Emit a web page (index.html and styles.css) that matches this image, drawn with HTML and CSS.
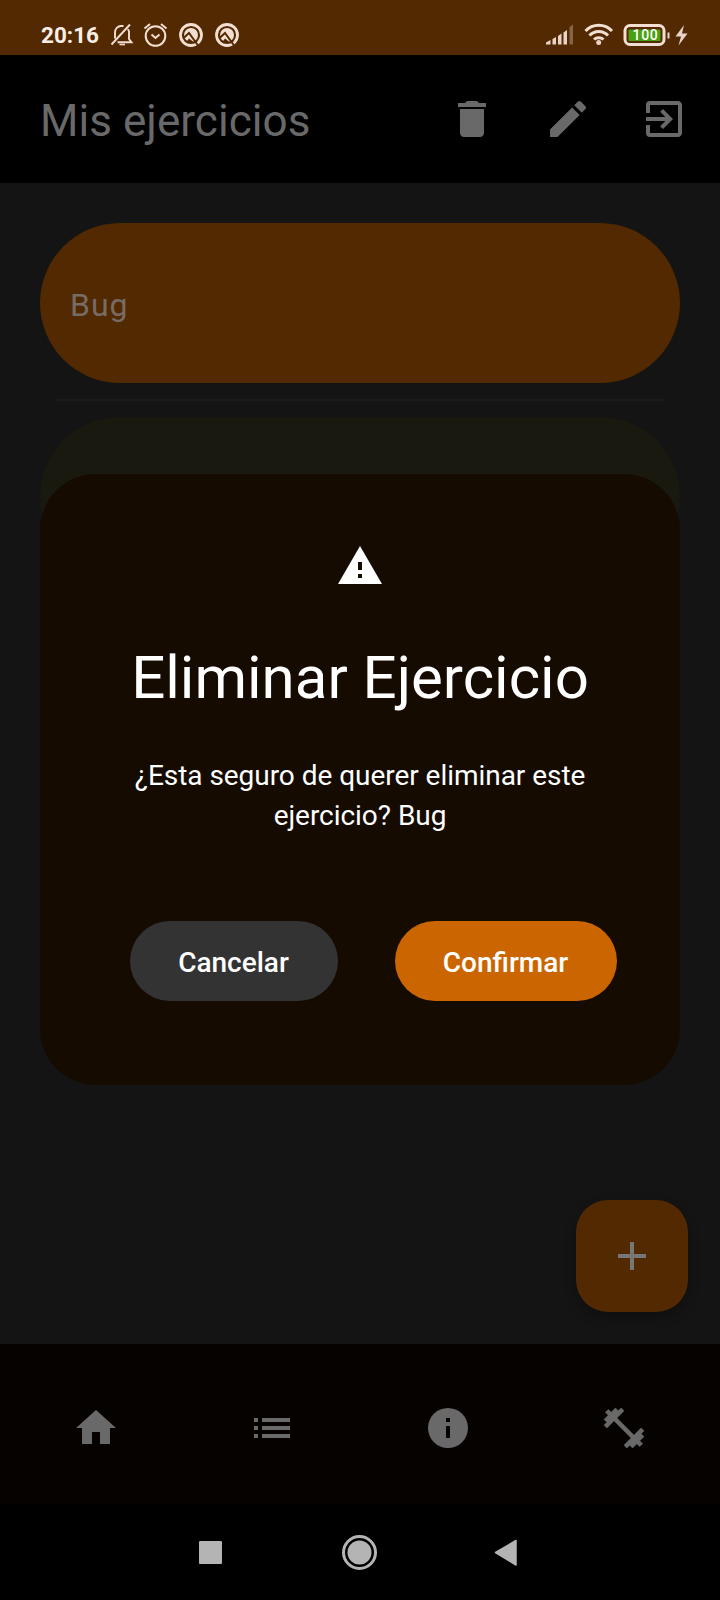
FILE: index.html
```html
<!DOCTYPE html>
<html lang="es">
<head>
<meta charset="utf-8">
<title>Mis ejercicios</title>
<link rel="stylesheet" href="styles.css">
</head>
<body>
<div class="screen">
  <header class="status">
    <span class="clock">20:16</span>
    <svg class="status-left" width="136" height="32" viewBox="0 0 136 32" fill="none" stroke="#f2dfd2" stroke-width="2">
      <path d="M9.500 25.300H23.500L21 22v-7.500l-1-2.500M7 21.500v-6c0-3.500 2.500-6 5.500-6.500h3M3.500 27.500L22 7.500" stroke-width="1.900"/>
      <path d="M11.500 27.500h5.500" stroke-width="1.600"/>
      <circle cx="47.500" cy="19" r="9.800"/><path d="M43.500 17.500l4 3.500 4-3.500M36.500 11.500l5.500-4.500M58.500 11.500l-5.500-4.500"/>
      <g id="q">
        <circle cx="83" cy="18" r="10.500" stroke-width="2.800"/>
        <circle cx="83" cy="18" r="7" fill="#f2dfd2" stroke="none"/>
        <path d="M75 21.500l6-5.500 9.800 13.500" stroke="#522900" stroke-width="2"/>
        <path d="M78 25.500l3-4 4.500 3.500z" fill="#522900" stroke="none"/>
      </g>
      <use href="#q" x="36"/>
    </svg>
    <svg class="status-right" width="146" height="32" viewBox="0 0 146 32" fill="#e9d3c7">
      <path d="M0 27.500v-2l4.500-2.500v4.500zM6.500 27.500v-5.500l3.500-2v7.500zM12 27.500v-8.500l3.500-2.500v11zM17.500 27.500v-12l3.500-2.500v14.500z"/>
      <path d="M23.500 27.500v-17.500l3.500-2.500v20z" opacity=".35"/>
      <g fill="none" stroke="#f2dfd2" stroke-width="3">
        <path d="M39.500 14a18 18 0 0 1 26.500 0M43.500 18.500a12.500 12.500 0 0 1 18.500 0M48 22.500a7 7 0 0 1 9.500 0"/>
        <rect x="79" y="8.500" width="39" height="19" rx="5"/>
      </g>
      <circle cx="52.700" cy="25.500" r="2.500"/>
      <rect x="82.500" y="12.500" width="32" height="11.500" rx="1" fill="#49a010"/>
      <path d="M121.500 15.500h2v6h-2zM138 8l-8.500 11.500h5.500l-2.500 9 9-12h-5.500z"/>
      <text x="99.500" y="23" class="battery" text-anchor="middle">100</text>
    </svg>
  </header>
  <div class="appbar">
    <h1>Mis ejercicios</h1>
    <div class="actions">
      <svg class="icon" viewBox="0 0 24 24"><path d="M6 19c0 1.100.9 2 2 2h8c1.100 0 2-.9 2-2V7H6v12zM19 4h-3.500l-1-1h-5l-1 1H5v2h14V4z"/></svg>
      <svg class="icon" viewBox="0 0 24 24"><path d="M3 17.250V21h3.750L17.810 9.940l-3.750-3.750L3 17.250zM20.710 7.040a1 1 0 0 0 0-1.410l-2.340-2.340a1 1 0 0 0-1.410 0l-1.830 1.830 3.750 3.750 1.830-1.830z"/></svg>
      <svg class="icon" viewBox="0 0 24 24"><path d="M10.090 15.590L11.500 17l5-5-5-5-1.410 1.410L12.670 11H3v2h9.670l-2.580 2.590zM19 3H5a2 2 0 0 0-2 2v4h2V5h14v14H5v-4H3v4a2 2 0 0 0 2 2h14c1.100 0 2-.9 2-2V5c0-1.100-.9-2-2-2z"/></svg>
    </div>
  </div>
  <main class="content">
    <div class="card">Bug</div>
    <div class="divider"></div>
    <div class="card card-faded"></div>
    <button class="fab" aria-label="Agregar"><svg class="icon" viewBox="0 0 24 24"><path d="M19 13h-6v6h-2v-6H5v-2h6V5h2v6h6v2z"/></svg></button>
  </main>
  <nav class="tabs">
    <div class="tab"><svg class="icon" viewBox="0 0 24 24"><path d="M10 20v-6h4v6h5v-8h3L12 3 2 12h3v8z"/></svg></div>
    <div class="tab"><svg class="icon" viewBox="0 0 24 24"><path d="M3 13h2v-2H3v2zm0 4h2v-2H3v2zm0-8h2V7H3v2zm4 4h14v-2H7v2zm0 4h14v-2H7v2zM7 7v2h14V7H7z"/></svg></div>
    <div class="tab"><svg class="icon" viewBox="0 0 24 24"><path d="M12 2a10 10 0 1 0 0 20 10 10 0 0 0 0-20zm1 15h-2v-6h2v6zm0-8h-2V7h2v2z"/></svg></div>
    <div class="tab"><svg class="icon" viewBox="0 0 24 24" stroke="currentColor"><path d="M20.570 14.860L22 13.430 20.570 12 17 15.570 8.430 7 12 3.430 10.570 2 9.140 3.430 7.710 2 5.570 4.140 4.140 2.710 2.710 4.140l1.430 1.430L2 7.710l1.430 1.430L2 10.570 3.430 12 7 8.430 15.570 17 12 20.570 13.430 22l1.430-1.430L16.290 22l2.140-2.140 1.430 1.430 1.430-1.430-1.430-1.430L22 16.290z" stroke-width=".3" stroke-linejoin="round"/><path d="M4 9.500L9.500 4M14.500 20L20 14.500" stroke-width="1.600"/></svg></div>
  </nav>
  <footer class="system">
    <svg width="720" height="96" viewBox="0 0 720 96" fill="#b4b4b4">
      <rect x="199" y="37" width="23" height="23" rx="1"/>
      <circle cx="359.500" cy="48.500" r="12"/><circle cx="359.500" cy="48.500" r="16" fill="none" stroke="#b4b4b4" stroke-width="3"/>
      <path d="M495.500 48.500L516 36.500V61z" stroke="#b4b4b4" stroke-width="1.500" stroke-linejoin="round"/>
    </svg>
  </footer>
  <section class="dialog" role="dialog">
    <svg class="icon warning" viewBox="0 0 24 24"><path d="M1 21h22L12 2 1 21zm12-3h-2v-2h2v2zm0-4h-2v-4h2v4z"/></svg>
    <h2>Eliminar Ejercicio</h2>
    <p>¿Esta seguro de querer eliminar este ejercicio? Bug</p>
    <div class="buttons">
      <button class="button cancel">Cancelar</button>
      <button class="button confirm">Confirmar</button>
    </div>
  </section>
</div>
</body>
</html>
```

FILE: styles.css
```css
* { box-sizing: border-box; }
body { margin: 0; background: #000; font-family: Roboto, "Noto Sans", sans-serif; }
h1, h2, p { margin: 0; font-weight: 400; }
button { border: 0; padding: 0; font-family: inherit; }
.screen { position: relative; width: 720px; height: 1600px; display: flex; flex-direction: column; overflow: hidden; }
.icon { display: block; width: 48px; height: 48px; fill: currentColor; }

.status { height: 55px; background: #522900; display: flex; align-items: center; padding: 13px 28px 3px 41px; color: #faeee6; }
.status svg { display: block; }
.clock { width: 67px; font-size: 22.5px; font-weight: 700; line-height: 38px; padding-top: 5px; }
.status-right { margin-left: auto; }
.battery { font-size: 14px; font-weight: 500; letter-spacing: .7px; fill: #fff; }

.appbar { height: 128px; display: flex; align-items: center; justify-content: space-between; padding: 0 32px 0 40px; color: #696969; }
.appbar h1 { font-size: 44px; line-height: 56px; padding-top: 3px; letter-spacing: .05px; }
.actions { display: flex; gap: 48px; }

.content { position: relative; height: 1161px; background: #141414; padding: 40px; }
.card { height: 160px; border-radius: 80px; background: #522900; color: #776c64; padding-left: 30px; font-size: 32px; letter-spacing: 1px; line-height: 164px; }
.divider { height: 2px; margin: 16px; background: #1b1b1b; }
.card-faded { background: #191910; }
.fab { position: absolute; right: 32px; bottom: 32px; width: 112px; height: 112px; border-radius: 32px; background: #522900; color: #777; display: grid; place-items: center; box-shadow: 0 6px 12px #0004; }

.tabs { height: 160px; background: #050200; padding: 0 8px; display: flex; align-items: center; color: #696969; }
.tab { flex: 1; display: flex; justify-content: center; padding-top: 8px; }
.system { height: 96px; background: #000; }
.system svg { display: block; }

.dialog { position: absolute; left: 40px; top: 474px; width: 640px; height: 611px; border-radius: 56px; background: #150b00; color: #fff; display: flex; flex-direction: column; align-items: center; padding-top: 68px; }
.dialog h2 { font-size: 60px; line-height: 80px; margin-top: 48px; white-space: nowrap; }
.dialog p { width: 480px; margin-top: 38px; font-size: 28px; line-height: 40px; letter-spacing: -.04px; text-align: center; }
.buttons { display: flex; gap: 57px; margin-top: 85px; align-self: stretch; padding-left: 90px; }
.button { height: 80px; border-radius: 40px; color: #fff; font-size: 28px; font-weight: 500; line-height: 76px; padding: 4px 1px 0 0; }
.cancel { width: 208px; background: #333; }
.confirm { width: 222px; background: #cb6500; }
```
